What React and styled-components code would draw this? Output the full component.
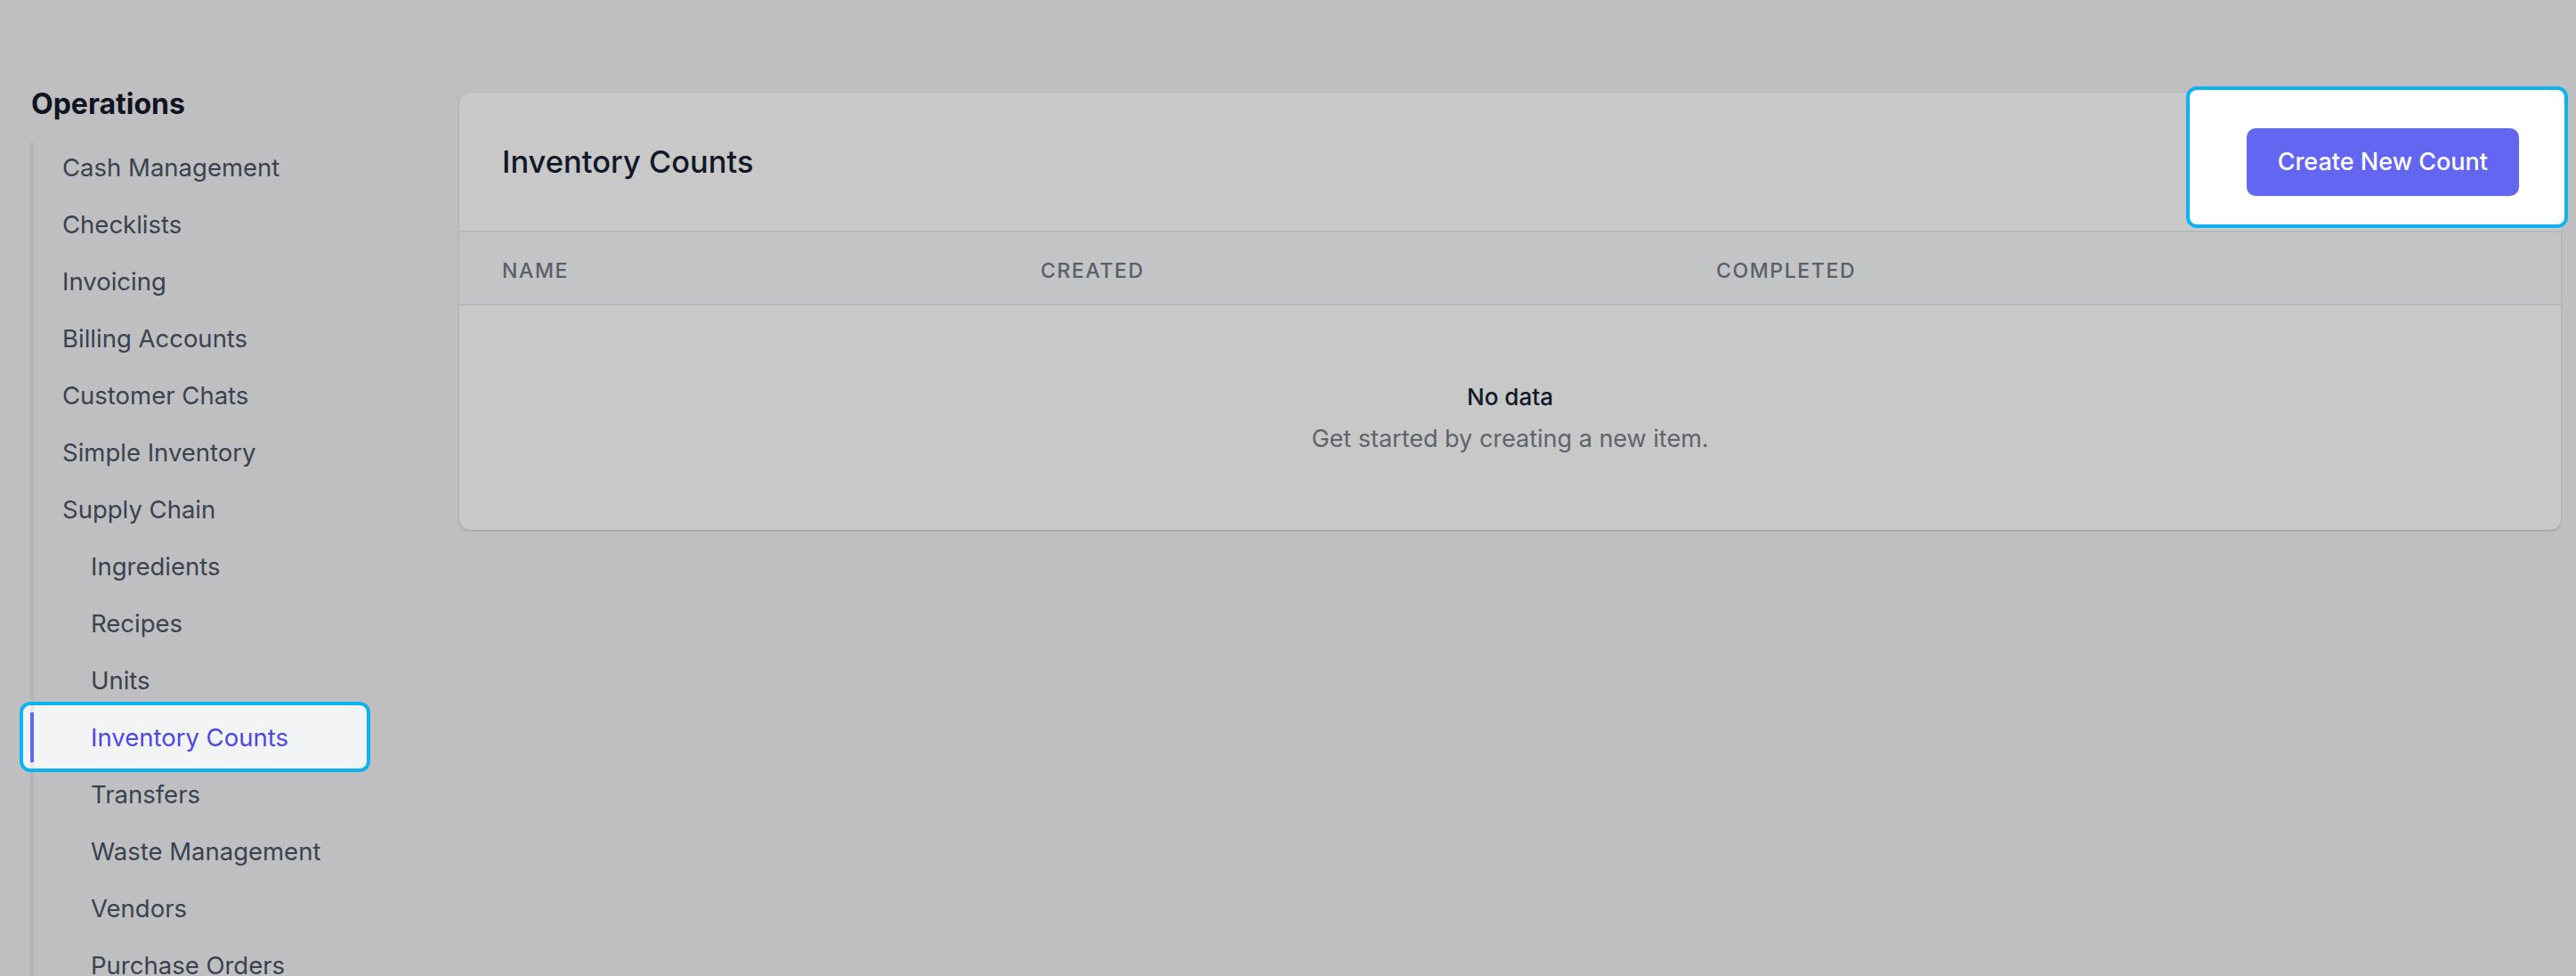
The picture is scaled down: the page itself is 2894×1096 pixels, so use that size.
import React from "react";
import styled, { createGlobalStyle } from "styled-components";

const GlobalStyle = createGlobalStyle`
  html, body {
    margin: 0;
    padding: 0;
    background: #bfbfc1;
    font-family: Inter, "Noto Sans", "Liberation Sans", sans-serif;
    overflow: hidden;
  }
  * { box-sizing: border-box; }
`;

const navItems = [
  { label: "Cash Management", level: 0 },
  { label: "Checklists", level: 0 },
  { label: "Invoicing", level: 0 },
  { label: "Billing Accounts", level: 0 },
  { label: "Customer Chats", level: 0 },
  { label: "Simple Inventory", level: 0 },
  { label: "Supply Chain", level: 0 },
  { label: "Ingredients", level: 1 },
  { label: "Recipes", level: 1 },
  { label: "Units", level: 1 },
  { label: "Inventory Counts", level: 1, active: true },
  { label: "Transfers", level: 1 },
  { label: "Waste Management", level: 1 },
  { label: "Vendors", level: 1 },
  { label: "Purchase Orders", level: 1 },
];

function App() {
  return (
    <>
      <GlobalStyle />
      <Page>
        <Sidebar>
          <SectionTitle>Operations</SectionTitle>
          <NavList>
            {navItems.map(item => (
              <NavItem key={item.label} $level={item.level} $active={item.active}>
                {item.label}
              </NavItem>
            ))}
          </NavList>
        </Sidebar>

        <Card>
          <CardHeader>
            <CardTitle>Inventory Counts</CardTitle>
            <ActionSpot>
              <PrimaryButton>Create New Count</PrimaryButton>
            </ActionSpot>
          </CardHeader>
          <TableHead>
            <HeadCell>Name</HeadCell>
            <HeadCell>Created</HeadCell>
            <HeadCell>Completed</HeadCell>
          </TableHead>
          <EmptyState>
            <EmptyTitle>No data</EmptyTitle>
            <EmptyText>Get started by creating a new item.</EmptyText>
          </EmptyState>
        </Card>
      </Page>
    </>
  );
}

const Page = styled.div`
  display: grid;
  grid-template-columns: 370px 1fr;
  column-gap: 112px;
  align-items: start;
  padding: 97px 17px 0 34px;
  height: 1096px;
`;

const Sidebar = styled.nav`
  display: flex;
  flex-direction: column;
`;

const SectionTitle = styled.h2`
  margin: 0 0 23px 1px;
  font-size: 32px;
  line-height: 40px;
  font-weight: 700;
  color: #0f1420;
`;

const NavList = styled.ul`
  list-style: none;
  margin: 0;
  padding: 0;
  border-left: 4px solid #b3b4b7;
`;

const NavItem = styled.li`
  position: relative;
  z-index: 0;
  height: 56px;
  line-height: 56px;
  margin-bottom: 8px;
  padding-left: ${p => (p.$level ? "64px" : "32px")};
  font-size: 27.5px;
  color: ${p => (p.$active ? "#4f46e5" : "#3a4250")};
  white-space: nowrap;

  ${p =>
    p.$active &&
    `
    &::before {
      content: "";
      position: absolute;
      top: -12px;
      bottom: -11px;
      left: -16px;
      right: -12px;
      z-index: -1;
      border: 4px solid #0cb3ef;
      border-radius: 12px;
      background: linear-gradient(#e5e7eb, #e5e7eb) no-repeat 8px 0 / 4px 100%, #f3f4f6;
    }
    &::after {
      content: "";
      position: absolute;
      top: 0;
      bottom: 0;
      left: -4px;
      width: 4px;
      background: #6366f1;
    }
  `}
`;

const Card = styled.section`
  margin-top: 7px;
  background: #c8c8c8;
  border-radius: 12px;
  box-shadow: 0 1px 3px rgba(0, 0, 0, 0.12), 0 1px 2px rgba(0, 0, 0, 0.08);
`;

const CardHeader = styled.div`
  display: flex;
  align-items: center;
  justify-content: space-between;
  height: 157px;
  padding: 0 47px 0 48px;
  border-bottom: 2px solid #b6b7ba;
`;

const CardTitle = styled.h1`
  margin: 0;
  font-size: 34.5px;
  font-weight: 500;
  color: #111827;
`;

const ActionSpot = styled.div`
  position: relative;
  z-index: 0;
  display: inline-flex;

  &::before {
    content: "";
    position: absolute;
    top: -47px;
    bottom: -36px;
    left: -68px;
    right: -55px;
    z-index: -1;
    background: #ffffff;
    border: 4px solid #0cb3ef;
    border-radius: 12px;
  }
`;

const PrimaryButton = styled.button`
  height: 76px;
  padding: 0 35px;
  border: none;
  border-radius: 10px;
  background: #6366f1;
  color: #ffffff;
  font-family: inherit;
  font-size: 27px;
  font-weight: 500;
  box-shadow: 0 1px 2px rgba(0, 0, 0, 0.06);
`;

const TableHead = styled.div`
  display: grid;
  grid-template-columns: 605px 759px 1fr;
  align-items: center;
  height: 82px;
  padding: 5px 48px 0;
  background: #c3c4c6;
  border-bottom: 2px solid #b6b7ba;
`;

const HeadCell = styled.div`
  font-size: 23px;
  font-weight: 500;
  letter-spacing: 0.07em;
  text-transform: uppercase;
  color: #5b5f68;
`;

const EmptyState = styled.div`
  display: flex;
  flex-direction: column;
  align-items: center;
  gap: 9px;
  padding: 85px 0 82px;
`;

const EmptyTitle = styled.p`
  margin: 0;
  font-size: 26px;
  line-height: 36px;
  font-weight: 500;
  color: #111827;
`;

const EmptyText = styled.p`
  margin: 0;
  font-size: 27px;
  line-height: 40px;
  color: #5f636c;
`;

export default App;
